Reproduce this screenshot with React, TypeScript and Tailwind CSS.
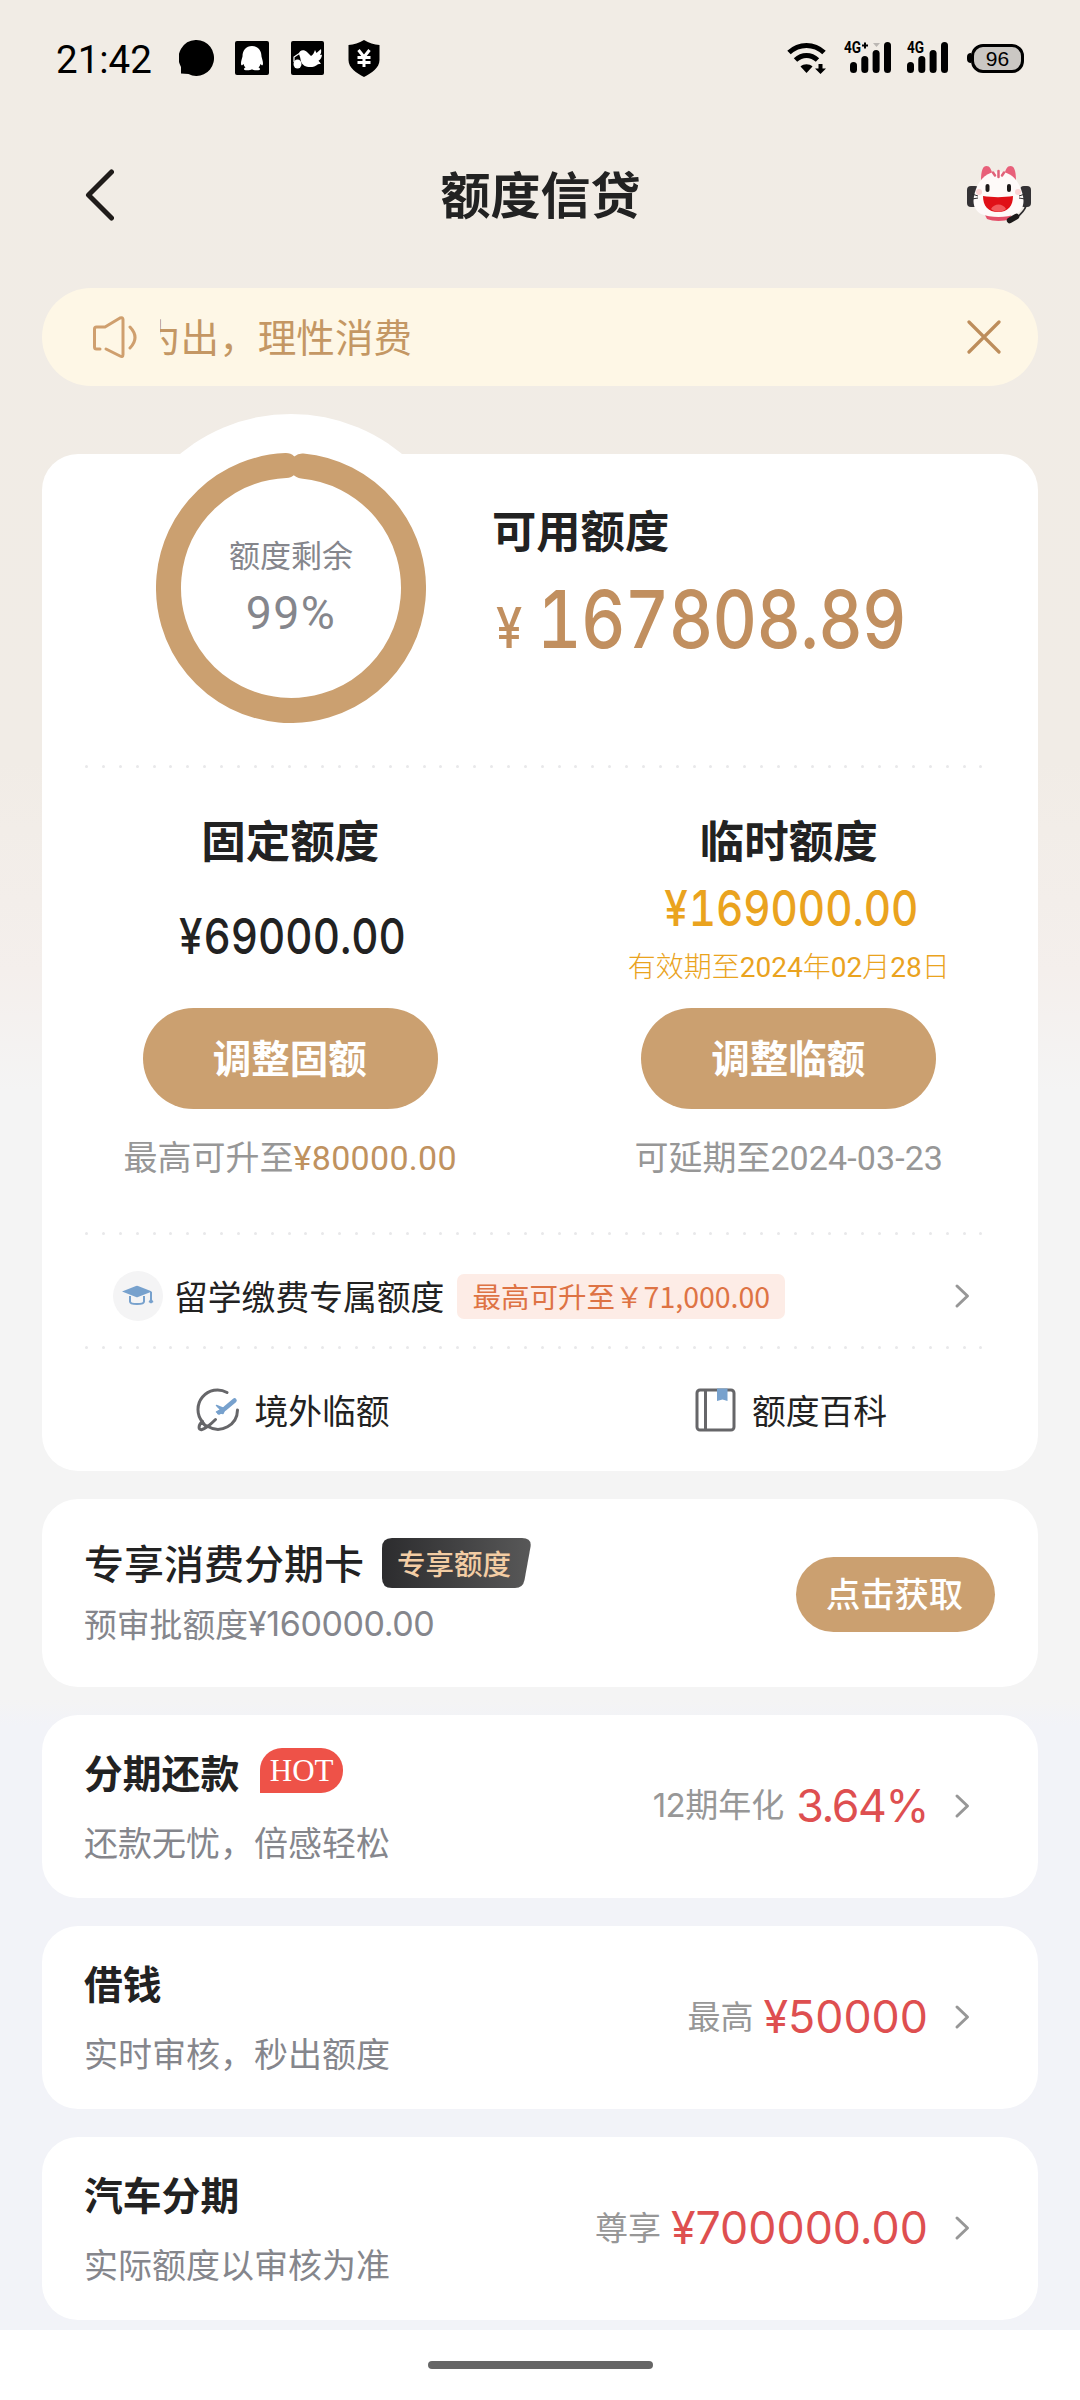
import type { ReactNode } from "react";

type Product = {
  title: string;
  desc: string;
  label: ReactNode;
  value: ReactNode;
  hot?: boolean;
};

const products: Product[] = [
  {
    title: "分期还款",
    desc: "还款无忧，倍感轻松",
    label: <span className="mr-[2px]"><span className="font-['Inter'] text-[33px] tracking-[-0.5px]">12</span>期年化</span>,
    value: <span className="tracking-[-1.4px]">3.64%</span>,
    hot: true,
  },
  { title: "借钱", desc: "实时审核，秒出额度", label: "最高", value: "¥50000" },
  { title: "汽车分期", desc: "实际额度以审核为准", label: "尊享", value: "¥700000.00" },
];

const DottedLine = () => (
  <div className="flex h-1 shrink-0 items-center justify-between pl-[43px] pr-[55px]">
    {Array.from({ length: 54 }, (_, i) => (
      <span key={i} className="size-[3px] rounded-full bg-[#e8e8ea]" />
    ))}
  </div>
);

const Chevron = () => (
  <svg className="h-[26px] w-[18px] shrink-0" viewBox="0 0 18 26" fill="none" stroke="#979797" strokeWidth="3" strokeLinecap="round" strokeLinejoin="round">
    <path d="M3 3 13.500 13 3 23" />
  </svg>
);

const Signal = ({ children, plus }: { children: ReactNode; plus?: boolean }) => (
  <div className="relative h-[32px] w-[48px]">
    {children}
    <svg className="absolute right-0 top-0" width="48" height="32" viewBox="0 0 48 32">
      {plus && <path d="M18 3.500h6M21 .5v6" stroke="#000" strokeWidth="2" />}
      {plus && <path d="M29 1h7l-3.500 4Z" fill="#bbb7b3" />}
      <rect x="6" y="20" width="7" height="11" rx="3.500" />
      <rect x="17.300" y="14" width="7" height="17" rx="3.500" />
      <rect x="28.600" y="8" width="7" height="23" rx="3.500" />
      <rect x="40" y="0" width="7" height="31" rx="3.500" />
    </svg>
  </div>
);

const StatusBar = () => (
  <div className="flex h-[116px] shrink-0 items-center pl-[56px] pr-[56px] text-black">
    <span className="mt-[3px] w-[123px] font-['Roboto'] text-[38.5px] leading-[40px]">21:42</span>
    <div className="flex items-center">
      {/* Mensagem */}
      <svg width="35" height="36" viewBox="0 0 35 36">
        <path d="M17.500 0a17.500 18 0 1 1-8 34L2 33.500V27A17.500 18 0 0 1 17.500 0Z" />
      </svg>
      {/* QQ */}
      <svg className="ml-[21px]" width="34" height="34" viewBox="0 0 34 34">
        <rect width="34" height="34" rx="2" />
        <path fill="#fff" d="M17 5c-6 0-9.500 4.500-9.500 10.500C6.500 19 5.500 22 6.300 24c.6 1 1.700-.5 2.200-1 .4 1.500 1 2.500 2 3.400-1.500.6-2 1.600-1.200 2.300 1.500 1 6 .8 7.700-.4 1.700 1.200 6.200 1.400 7.700.4.800-.7.300-1.700-1.200-2.300 1-.9 1.600-1.900 2-3.400.5.500 1.600 2 2.200 1 .8-2-.2-5-1.200-8.500C26.500 9.500 23 5 17 5Z" />
      </svg>
      {/* Pomba */}
      <svg className="ml-[22px]" width="33" height="34" viewBox="0 0 33 34">
        <rect width="33" height="34" rx="2" />
        <path fill="#fff" d="M8 13c0-4 5-5 8-2l4 4c2-1 3-3 4-6l1.500 3L30 8c.5 3 0 5-1 6l2-.3c-.3 3-1.500 5-3.500 6l2.500 3-3 .5c-3 2.500-7 3.500-11 2.500-4-1-6-4-6.500-7.500C9.300 16 8.500 15 8 13Z" />
        <path stroke="#fff" strokeWidth="1.200" fill="none" d="m9 12-6 4v5" />
        <ellipse cx="6.500" cy="23" rx="4" ry="4.500" fill="#fff" />
      </svg>
      {/* Escudo */}
      <svg className="ml-[24px]" width="32" height="37" viewBox="0 0 32 37">
        <path d="M16 0c5 3 10 4.500 15.500 5v15c0 8-8 13-15.500 17C8.500 33 .5 28 .5 20V5C6 4.500 11 3 16 0Z" />
        <path stroke="#fff" strokeWidth="3" fill="none" d="m10.500 10 5.500 7 5.500-7M16 17v10M9.500 17.500h13M9.500 22.500h13" />
      </svg>
    </div>
    <div className="ml-auto flex items-center">
      <svg width="40" height="32" viewBox="0 0 40 32">
        <g fill="none" stroke="#000" strokeWidth="5">
          <path d="M2 10.500C12 1 27 1 37 10.500" />
          <path d="M8.500 18C15 12 24 12 30.500 18" />
        </g>
        <path d="M13.500 24.500c3-3 9-3 12 0L19.500 31Z" />
        <path d="M31.500 22h4v4.500h3.500L33.500 32 28 26.500h3.500Z" />
      </svg>
      <div className="ml-[17px]">
        <Signal plus>
          <span className="absolute left-0 top-[-1px] origin-left scale-x-[0.85] font-['Roboto'] text-[16px] font-bold leading-[14px]">4G</span>
        </Signal>
      </div>
      <div className="ml-[9px]">
        <Signal>
          <span className="absolute left-[6px] top-[-1px] origin-left scale-x-[0.85] font-['Roboto'] text-[16px] font-bold leading-[14px]">4G</span>
        </Signal>
      </div>
      <div className="ml-[18px] h-[10px] w-[4px] rounded-l-full bg-black" />
      <div className="flex h-[29px] w-[53px] items-center justify-center rounded-[12px] border-[3px] border-black bg-[#cac7c3] font-['Liberation_Sans'] text-[21px] leading-none">96</div>
    </div>
  </div>
);

const Mascot = () => (
  <svg width="66" height="58" viewBox="0 0 66 58">
    <path d="M14 15C14 4 16 0 19.500 0S24 3 26 9ZM49 15C49 4 47 0 43.500 0S39 3 37 9Z" fill="#e8607a" />
    <rect x="0" y="20" width="12" height="21" rx="4" fill="#343235" />
    <rect x="53" y="20" width="11" height="21" rx="4" fill="#343235" />
    <path d="M17 47h28l-2 6c-6 2.500-17 2.500-23 0Z" fill="#e4506a" />
    <path d="M31.500 5.500C42 5.500 50 12 54 23c5 14 2 21-5 25-9 4-26 4-35 0C7 44 4 37 9 23 13 12 21 5.500 31.500 5.500Z" fill="#fefaf9" />
    <path d="M31.500 5v6M26 6.500l2 3M37 6.500l-2 3" stroke="#e0637a" strokeWidth="2.500" strokeLinecap="round" />
    <rect x="18.500" y="18" width="4" height="8" rx="2" fill="#1d1a1a" />
    <rect x="40" y="18" width="4" height="8" rx="2" fill="#1d1a1a" />
    <circle cx="12" cy="26" r="3" fill="#fbd5d5" />
    <circle cx="51" cy="26" r="3" fill="#fbd5d5" />
    <path d="M16 30c9 1.500 21 1.500 30 0 0 10-5 16-15 16s-15-6-15-16Z" fill="#e01018" />
    <path d="M24 43c3-6 12-6 15 0-4 3.500-11 3.500-15 0Z" fill="#f2585c" />
    <path d="M5 28l6 2M5 33l6-1M58 28l-6 2M58 33l-6-1" stroke="#2e2c2e" strokeWidth="1" />
    <path d="M59 40c-2 6-6 9-10 12" stroke="#2e2c2e" strokeWidth="1.800" fill="none" />
    <path d="m42.500 54.500 7-4" stroke="#1d1a1a" strokeWidth="5.500" strokeLinecap="round" />
  </svg>
);

const Header = () => (
  <div className="flex h-[172px] shrink-0 items-start justify-between pl-[84px] pr-[47px] pt-[49px]">
    <svg className="mt-[4px]" width="30" height="52" viewBox="0 0 30 52" fill="none" stroke="#201c1a" strokeWidth="5" strokeLinecap="round" strokeLinejoin="round">
      <path d="M27.500 3 4.500 26 27.500 49" />
    </svg>
    <h1 className="mt-[-2px] text-[50px] font-bold leading-[58px] text-[#222]">额度信贷</h1>
    <div className="mt-[1px]"><Mascot /></div>
  </div>
);

const Notice = () => (
  <div className="mx-[42px] flex h-[98px] shrink-0 items-center rounded-full bg-[#fef7e6] pl-[50px] pr-[37px] text-[#c49764]">
    <svg width="48" height="44" viewBox="0 0 48 44" fill="none" stroke="#cf9f6e" strokeWidth="3" strokeLinecap="round" strokeLinejoin="round">
      <path d="M8 34H4.500Q2.500 34 2.500 32V14Q2.500 12 4.500 12H13L28 3q3-1 3 1.500v35q0 3-3 1.500L14 34" />
      <path d="M38 12q10 10.500 0 21" />
    </svg>
    <div className="mb-[4px] ml-[20px] flex flex-1 overflow-hidden">
      <span className="ml-[-18px] whitespace-nowrap text-[38.6px] leading-[50px]">为出，理性消费</span>
    </div>
    <svg width="34" height="34" viewBox="0 0 34 34" stroke="#bd8d5b" strokeWidth="3.200" strokeLinecap="round">
      <path d="M2 2 32 32M32 2 2 32" />
    </svg>
  </div>
);

const QuotaRing = () => (
  <div className="absolute left-[75px] top-[-40px] flex size-[348px] flex-col items-center rounded-full bg-white pt-[120px]">
    <svg className="absolute left-[39px] top-[39px]" width="270" height="270" viewBox="0 0 270 270">
      <circle
        cx="135" cy="135" r="122.500" fill="none" stroke="#cba070" strokeWidth="25" strokeLinecap="round"
        pathLength="1000" strokeDasharray="978.500 21.500" transform="rotate(-84.700 135 135)"
      />
    </svg>
    <span className="text-[31px] leading-[40px] text-[#85868c]">额度剩余</span>
    <span className="mt-[11px] font-['Roboto'] text-[46.5px] leading-[56px] tracking-[1.4px] text-[#85868c]">99%</span>
  </div>
);

const Amount = ({ value }: { value: string }) => (
  <span className="scale-x-[0.86] whitespace-nowrap pl-[5px] font-['Inter'] text-[49px] font-medium leading-none tabular-nums">
    <span className="mr-[1px]">¥</span>{value}
  </span>
);

const PillButton = ({ children }: { children: ReactNode }) => (
  <button className="h-[101px] w-[295px] shrink-0 rounded-full bg-[#cba070] pb-[3px] pr-[1px] text-[38.5px] font-bold text-white">{children}</button>
);

const QuotaCard = () => (
  <section className="relative mx-[42px] mt-[68px] flex h-[1017px] shrink-0 flex-col rounded-[36px] bg-white">
    <QuotaRing />
    <div className="flex h-[310px] shrink-0 flex-col pl-[450px] pt-[49px]">
      <h2 className="text-[44.3px] font-bold leading-[52px] text-[#222]">可用额度</h2>
      <div className="mt-[19px] flex h-[90px] items-baseline font-['Inter'] text-[#c18f5f]">
        <span className="ml-[4px] w-[41px] origin-left scale-x-[0.84] text-[56px] font-medium leading-[90px]">¥</span>
        <span className="origin-left scale-x-[0.86] text-[80px] font-medium leading-[90px] tracking-[-0.8px] tabular-nums">167808.89</span>
      </div>
    </div>
    <DottedLine />
    <div className="flex h-[463px] shrink-0 pt-[43px]">
      <div className="flex flex-1 flex-col items-center pr-[2px]">
        <h3 className="mt-[-2px] mb-[2px] text-[44.5px] font-bold leading-[60px] text-[#222]">固定额度</h3>
        <div className="mb-[7px] flex h-[130px] items-center text-[#222]"><Amount value="69000.00" /></div>
        <PillButton>调整固额</PillButton>
        <p className="whitespace-nowrap text-[34px] leading-[94px] text-[#979797]">
          最高可升至<span className="font-['Roboto'] tracking-[0.3px] text-[#c0925f]">¥80000.00</span>
        </p>
      </div>
      <div className="flex flex-1 flex-col items-center pr-[1px]">
        <h3 className="mt-[-2px] mb-[2px] text-[44.5px] font-bold leading-[60px] text-[#222]">临时额度</h3>
        <div className="flex h-[75px] items-center text-[#eaa31e]"><Amount value="169000.00" /></div>
        <p className="mt-[1px] mb-[19px] font-['Roboto','Noto_Sans_CJK_SC',sans-serif] text-[28px] font-light leading-[42px] text-[#eaa31e]">
          有效期至<span className="font-normal">2024</span>年<span className="font-normal">02</span>月<span className="font-normal">28</span>日
        </p>
        <PillButton>调整临额</PillButton>
        <p className="whitespace-nowrap text-[34px] leading-[94px] text-[#979797]">可延期至<span className="font-['Roboto'] tracking-[0.1px]">2024-03-23</span></p>
      </div>
    </div>
    <DottedLine />
    <div className="flex h-[110px] shrink-0 items-center pl-[71px] pr-[66px] pt-3">
      <div className="flex size-[50px] items-center justify-center rounded-full bg-[#f4f4f5]">
        <svg width="34" height="24" viewBox="0 0 34 24">
          <path d="M1 7.500 15 2q1-.4 2 0l14 5.500L17 13q-1 .4-2 0Z" fill="#77a1cd" />
          <path d="M9 12v5.500q0 2.500 7 2.500t7-2.500V12M30 8v9" fill="none" stroke="#77a1cd" strokeWidth="2" />
          <path d="m30 14 2.500 4L30 19.500 27.500 18Z" fill="#77a1cd" />
        </svg>
      </div>
      <span className="ml-[11px] text-[33.8px] text-[#222]">留学缴费专属额度</span>
      <span className="ml-[13px] flex h-[45px] w-[328px] items-center justify-center whitespace-nowrap rounded-[7px] bg-[#fdece6] text-[28.5px] leading-none text-[#de7344]">最高可升至￥71,000.00</span>
      <div className="ml-auto flex"><Chevron /></div>
    </div>
    <DottedLine />
    <div className="flex flex-1 items-center text-[33.8px] text-[#222]">
      <div className="flex flex-1 items-center justify-center gap-[14px] pl-[4px]">
        <svg width="44" height="44" viewBox="0 0 44 44" fill="none" stroke="#666669" strokeWidth="3" strokeLinecap="round">
          <path d="M31 4.500A19.500 19.500 0 0 0 6.500 34M41.500 22A19.500 19.500 0 0 1 12 38.500" />
          <path d="M6.500 33.500C2 37 2 42.500 6 41.500 10 40.500 15 36 19.500 31.500M6.500 34q2 4 5.500 4.500" />
          <path d="m23 24.500 6-4 9.500-8" stroke="#77a1cd" strokeWidth="4.500" />
          <path d="m20.500 17.500 8.500 3.500-2 4.500-6.500-1.500 4.500-2Z" fill="#77a1cd" stroke="#77a1cd" strokeWidth="1.500" strokeLinejoin="round" />
        </svg>
        <span>境外临额</span>
      </div>
      <div className="flex flex-1 items-center justify-center gap-[15px] pl-[4px]">
        <svg width="42" height="44" viewBox="0 0 42 44" fill="none" stroke="#666669" strokeWidth="3">
          <rect x="2" y="2" width="37" height="40" rx="3" />
          <path d="M10.500 2v40" />
          <path d="M22 .5h10.500V13l-5-1.500L22 13Z" fill="#77a1cd" stroke="none" />
        </svg>
        <span>额度百科</span>
      </div>
    </div>
  </section>
);

const InstallmentCard = () => (
  <section className="mx-[42px] mt-[28px] flex h-[188px] shrink-0 items-center justify-between rounded-[36px] bg-white pl-[42px] pr-[43px]">
    <div className="h-full pt-[39px]">
      <div className="flex h-[50px] items-center">
        <h3 className="mb-[3px] text-[40px] font-medium leading-none text-[#222]">专享消费分期卡</h3>
        <div className="relative ml-[18px] h-[50px] w-[149px]">
          <svg className="absolute inset-0" width="149" height="50" viewBox="0 0 149 50">
            <defs>
              <linearGradient id="tag">
                <stop offset="0" stopColor="#2c2c2e" />
                <stop offset="1" stopColor="#585858" />
              </linearGradient>
            </defs>
            <path fill="url(#tag)" d="M10 0h130q10 0 8.500 9l-6 33q-1.500 8-9.500 8H10Q0 50 0 40V10Q0 0 10 0Z" />
          </svg>
          <span className="relative block pl-[15px] text-[28.5px] font-medium leading-[50px] text-[#f3cda4]">专享额度</span>
        </div>
      </div>
      <p className="mt-[10px] flex text-[32.8px] leading-[50px] text-[#85868c]">
        预审批额度<span className="mt-[1px] font-['Inter'] text-[34px] tracking-[-0.4px]">¥160000.00</span>
      </p>
    </div>
    <button className="mt-[2px] h-[75px] w-[199px] rounded-full bg-[#cba070] pb-[3px] pr-[2px] text-[34.3px] font-medium leading-none text-white">点击获取</button>
  </section>
);

const ProductCard = ({ title, desc, label, value, hot }: Product) => (
  <section className="mx-[42px] flex h-[183px] shrink-0 items-center justify-between rounded-[36px] bg-white pl-[42px] pr-[66px]">
    <div className="h-full pt-[31px]">
      <div className="flex h-[50px] items-center">
        <h3 className="text-[38.8px] font-bold leading-none text-[#222]">{title}</h3>
        {hot && (
          <span className="mb-[1px] ml-[21px] flex h-[45px] w-[83px] items-center justify-center rounded-[22px] rounded-bl-none bg-[#ee5248] pb-[1px] font-['Liberation_Serif'] text-[31px] leading-none text-white">HOT</span>
        )}
      </div>
      <p className="mt-[21px] text-[34px] leading-[50px] text-[#85868c]">{desc}</p>
    </div>
    <div className="flex items-center">
      <span className="mb-[4px] text-[33px] leading-none text-[#979797]">{label}</span>
      <span className="ml-[10px] mr-[26px] font-['Inter'] text-[44.7px] leading-none text-[#de4f50]">{value}</span>
      <Chevron />
    </div>
  </section>
);

export default function App() {
  return (
    <main className="flex h-[2400px] w-[1080px] flex-col overflow-hidden bg-[linear-gradient(180deg,#f1ece5_0px,#f1ece6_760px,#f4efec_970px,#f4f4f4_1090px,#f4f4f4_1700px,#f2f3f8_1725px)] font-['Noto_Sans_CJK_SC',sans-serif]">
      <StatusBar />
      <Header />
      <Notice />
      <QuotaCard />
      <InstallmentCard />
      <div className="mt-[28px] flex flex-col gap-[28px]">
        {products.map((product) => (
          <ProductCard key={product.title} {...product} />
        ))}
      </div>
      <footer className="mt-auto flex h-[70px] shrink-0 justify-center bg-white pt-[31px]">
        <div className="h-[8px] w-[225px] rounded-full bg-[#666]" />
      </footer>
    </main>
  );
}
